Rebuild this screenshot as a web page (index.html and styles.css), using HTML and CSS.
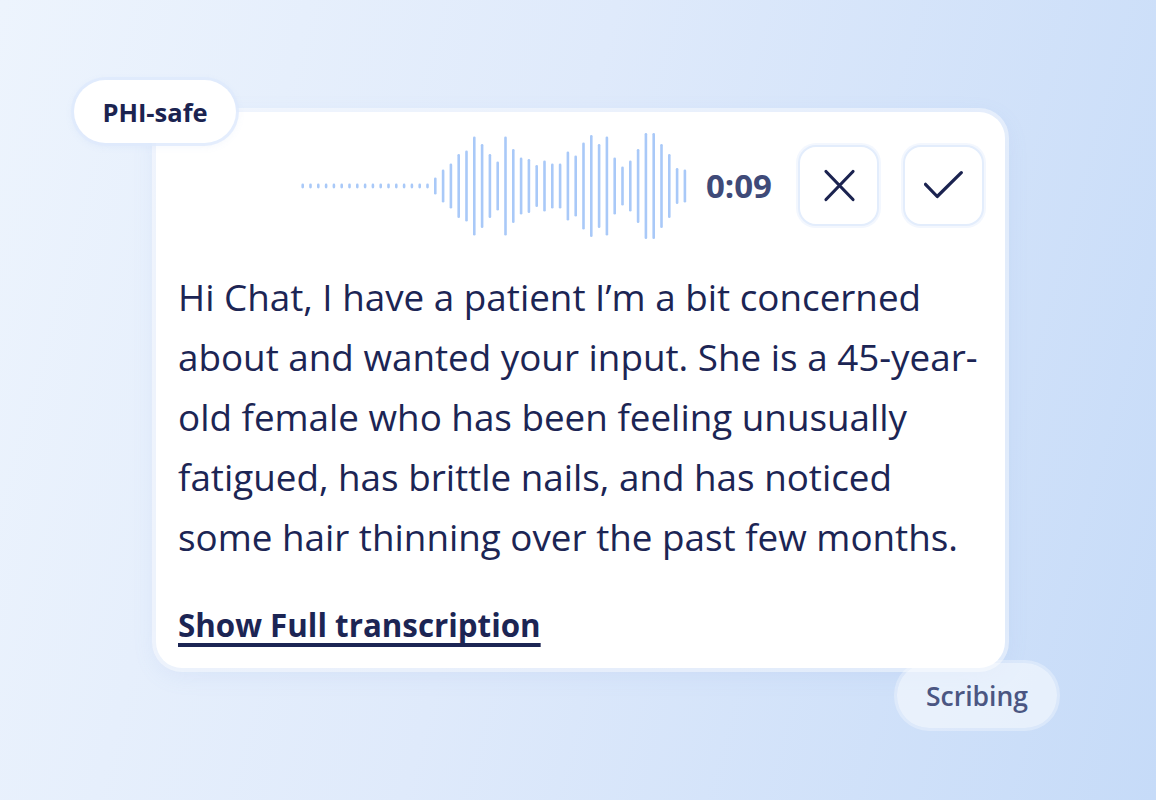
FILE: index.html
```html
<!DOCTYPE html>
<html lang="en">
<head>
<meta charset="utf-8">
<title>Scribing</title>
<link rel="stylesheet" href="styles.css">
</head>
<body>
<main class="stage">
  <section class="card">
    <span class="badge badge-phi">PHI-safe</span>
    <div class="recorder">
      <svg class="wave" width="386" height="110" viewBox="0 0 386 110" aria-hidden="true">
        <g fill="#a9c9f8">
          <rect x="0.4" y="52.6" width="2.6" height="4.8" rx="1.3"/>
          <rect x="8.2" y="52.6" width="2.6" height="4.8" rx="1.3"/>
          <rect x="16" y="52.6" width="2.6" height="4.8" rx="1.3"/>
          <rect x="23.8" y="52.6" width="2.6" height="4.8" rx="1.3"/>
          <rect x="31.6" y="52.6" width="2.6" height="4.8" rx="1.3"/>
          <rect x="39.4" y="52.6" width="2.6" height="4.8" rx="1.3"/>
          <rect x="47.2" y="52.6" width="2.6" height="4.8" rx="1.3"/>
          <rect x="55" y="52.6" width="2.6" height="4.8" rx="1.3"/>
          <rect x="62.8" y="52.6" width="2.6" height="4.8" rx="1.3"/>
          <rect x="70.6" y="52.6" width="2.6" height="4.8" rx="1.3"/>
          <rect x="78.4" y="52.6" width="2.6" height="4.8" rx="1.3"/>
          <rect x="86.2" y="52.6" width="2.6" height="4.8" rx="1.3"/>
          <rect x="94" y="52.6" width="2.6" height="4.8" rx="1.3"/>
          <rect x="101.8" y="52.6" width="2.6" height="4.8" rx="1.3"/>
          <rect x="109.6" y="52.6" width="2.6" height="4.8" rx="1.3"/>
          <rect x="117.4" y="52.6" width="2.6" height="4.8" rx="1.3"/>
          <rect x="125.2" y="52.6" width="2.6" height="4.8" rx="1.3"/>
          <rect x="133" y="46.5" width="2.6" height="17" rx="1.3"/>
          <rect x="140.8" y="38.5" width="2.6" height="33" rx="1.3"/>
          <rect x="148.6" y="32.5" width="2.6" height="45" rx="1.3"/>
          <rect x="156.4" y="23" width="2.6" height="64" rx="1.3"/>
          <rect x="164.2" y="19.5" width="2.6" height="71" rx="1.3"/>
          <rect x="172" y="5.5" width="2.6" height="99" rx="1.3"/>
          <rect x="179.8" y="13" width="2.6" height="84" rx="1.3"/>
          <rect x="187.6" y="23" width="2.6" height="64" rx="1.3"/>
          <rect x="195.4" y="30.5" width="2.6" height="49" rx="1.3"/>
          <rect x="203.2" y="5.5" width="2.6" height="99" rx="1.3"/>
          <rect x="211" y="18" width="2.6" height="74" rx="1.3"/>
          <rect x="218.8" y="26.5" width="2.6" height="57" rx="1.3"/>
          <rect x="226.6" y="28" width="2.6" height="54" rx="1.3"/>
          <rect x="234.4" y="34" width="2.6" height="42" rx="1.3"/>
          <rect x="242.2" y="29.5" width="2.6" height="51" rx="1.3"/>
          <rect x="250" y="32.5" width="2.6" height="45" rx="1.3"/>
          <rect x="257.8" y="32.5" width="2.6" height="45" rx="1.3"/>
          <rect x="265.6" y="20.5" width="2.6" height="69" rx="1.3"/>
          <rect x="273.4" y="24.5" width="2.6" height="61" rx="1.3"/>
          <rect x="281.2" y="11.5" width="2.6" height="87" rx="1.3"/>
          <rect x="289" y="4" width="2.6" height="102" rx="1.3"/>
          <rect x="296.8" y="13" width="2.6" height="84" rx="1.3"/>
          <rect x="304.6" y="5.5" width="2.6" height="99" rx="1.3"/>
          <rect x="312.4" y="26.5" width="2.6" height="57" rx="1.3"/>
          <rect x="320.2" y="35.5" width="2.6" height="39" rx="1.3"/>
          <rect x="328" y="29.5" width="2.6" height="51" rx="1.3"/>
          <rect x="335.8" y="18" width="2.6" height="74" rx="1.3"/>
          <rect x="343.6" y="2" width="2.6" height="106" rx="1.3"/>
          <rect x="351.4" y="2" width="2.6" height="106" rx="1.3"/>
          <rect x="359.2" y="13" width="2.6" height="84" rx="1.3"/>
          <rect x="367" y="23" width="2.6" height="64" rx="1.3"/>
          <rect x="374.8" y="37" width="2.6" height="36" rx="1.3"/>
          <rect x="382.6" y="38.5" width="2.6" height="33" rx="1.3"/>
        </g>
      </svg>
      <span class="timer">0:09</span>
      <button class="icon-btn" type="button" aria-label="Cancel">
        <svg width="40" height="40" viewBox="0 0 40 40" aria-hidden="true">
          <path d="M7 5.5 L34 33.5 M34 5.5 L7 33.5" fill="none" stroke="#1b2350" stroke-width="3.2" stroke-linecap="round"/>
        </svg>
      </button>
      <button class="icon-btn" type="button" aria-label="Confirm">
        <svg width="40" height="40" viewBox="0 0 40 40" aria-hidden="true">
          <path d="M1.5 18.3 L13.2 30.5 L37.3 6.7" fill="none" stroke="#1b2350" stroke-width="3.2" stroke-linecap="round" stroke-linejoin="round"/>
        </svg>
      </button>
    </div>
    <p class="transcript">Hi Chat, I have a patient I’m a bit concerned<br>about and wanted your input. She is a 45-year-<br>old female who has been feeling unusually<br>fatigued, has brittle nails, and has noticed<br>some hair thinning over the past few months.</p>
    <a class="full-link" href="#">Show Full transcription</a>
    <span class="badge badge-status">Scribing</span>
  </section>
</main>
</body>
</html>
```

FILE: styles.css
```css
* { box-sizing: border-box; }

html, body {
  margin: 0;
  padding: 0;
}

body {
  width: 1156px;
  height: 800px;
  overflow: hidden;
  font-family: "Open Sans", "Noto Sans", sans-serif;
  color: #1c2554;
  background: linear-gradient(105deg, #edf4fd 0%, #dfeafb 45%, #c6dbf8 100%);
}

.stage {
  display: flex;
  align-items: flex-start;
  padding: 112px 0 0 156px;
}

.card {
  position: relative;
  width: 849px;
  background: #ffffff;
  border-radius: 26px;
  box-shadow: 0 0 0 4px rgba(255, 255, 255, 0.45), 0 6px 24px rgba(120, 160, 220, 0.12);
  padding: 33px 21px 21px 22px;
  display: flex;
  flex-direction: column;
  align-items: flex-start;
}

.recorder {
  align-self: stretch;
  height: 81px;
  display: flex;
  align-items: center;
  justify-content: flex-end;
}

.wave {
  display: block;
  margin: -15px 19px -15px 0;
}

.timer {
  font-size: 33px;
  font-weight: 700;
  color: #3f4a78;
  margin-right: 26px;
}

.icon-btn {
  width: 81px;
  height: 81px;
  border-radius: 18px;
  border: 2px solid #e3edfc;
  box-shadow: 0 0 0 2px rgba(228, 238, 252, 0.45);
  background: #ffffff;
  display: flex;
  align-items: center;
  justify-content: center;
  padding: 0;
  cursor: pointer;
}

.icon-btn + .icon-btn {
  margin-left: 24px;
}

.transcript {
  margin: 41px 0 0 0;
  font-size: 36.8px;
  line-height: 60px;
  color: #1c2554;
  white-space: nowrap;
}

.full-link {
  margin-top: 36px;
  font-size: 31.3px;
  font-weight: 700;
  color: #1c2554;
  text-decoration: underline;
  text-decoration-thickness: 3.5px;
  text-underline-offset: 6px;
  text-decoration-skip-ink: none;
  line-height: 44px;
}

.badge {
  position: absolute;
  display: flex;
  align-items: center;
  justify-content: center;
  height: 63px;
  width: 162px;
  border-radius: 32px;
  font-size: 25.5px;
  font-weight: 700;
}

.badge-phi {
  left: -82px;
  top: -32px;
  background: #ffffff;
  color: #1b2350;
  box-shadow: 0 0 0 3px rgba(222, 234, 252, 0.8), 0 2px 10px rgba(120, 160, 220, 0.12);
}

.badge-status {
  right: -52px;
  bottom: -60px;
  width: 160px;
  height: 65px;
  background: rgba(255, 255, 255, 0.55);
  color: #4b5682;
  font-size: 26.5px;
  font-weight: 600;
  box-shadow: 0 0 0 3px rgba(255, 255, 255, 0.3);
}
```
